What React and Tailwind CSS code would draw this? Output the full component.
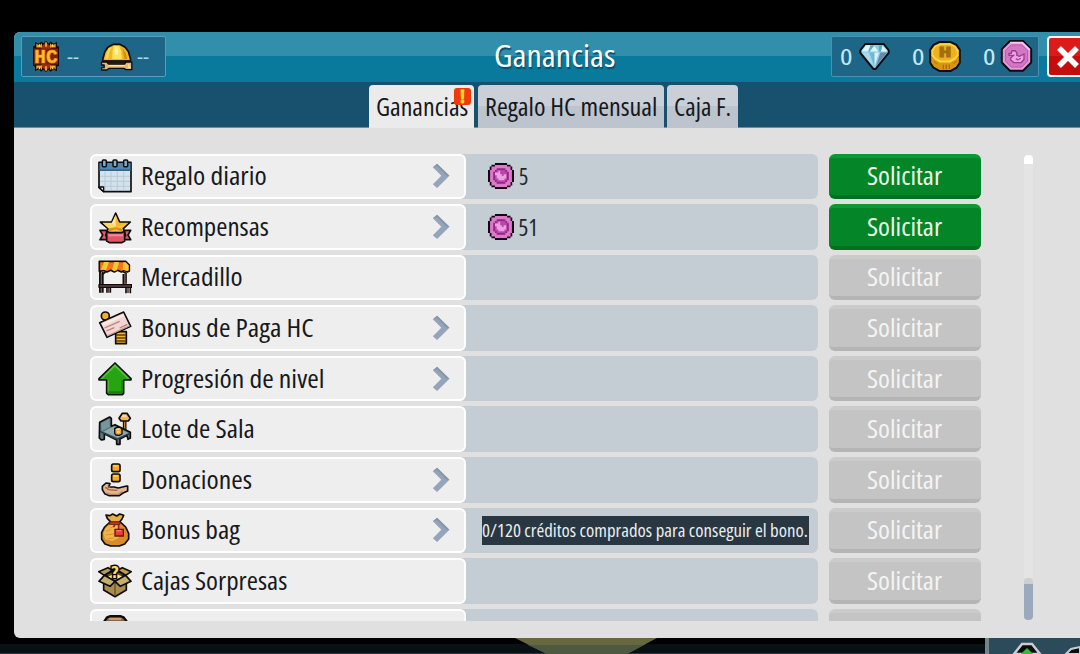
import React, { useLayoutEffect, useRef, useState } from "react";

const OUTLINE = { stroke: "#0d0d0d", strokeWidth: 5, strokeLinejoin: "round" };

// Condensed label: squeezes its text horizontally to the given width
function Squeeze({ width, className = "", children }) {
    const ref = useRef(null);
    const [scale, setScale] = useState(0.75);

    useLayoutEffect(() => {
        if (ref.current.offsetWidth) {
            setScale(width / ref.current.offsetWidth);
        }
    }, [width, children]);

    return (
        <span className={`block shrink-0 text-left whitespace-nowrap ${className}`} style={{ width }}>
            <span ref={ref} className="inline-block origin-left" style={{ transform: `scaleX(${scale})` }}>
                {children}
            </span>
        </span>
    );
}

function Icon({ children }) {
    return (
        <svg viewBox="0 0 102 102" className="w-[34px] h-[34px] shrink-0">
            {children}
        </svg>
    );
}

function CalendarIcon() {
    return (
        <Icon>
            <path d="M3 10H99V98H17L3 86Z" fill="#d3e2ec" {...OUTLINE} />
            <path d="M5 12H97V35H5Z" fill="#4c86b4" />
            <path d="M5 31H97V36H5Z" fill="#35688f" />
            <path d="M21 37V95M39 37V95M58 37V95M77 37V95M6 52H96M6 67H96M6 82H96" stroke="#b2c7d4" strokeWidth="2.5" />
            <path d="M3 84H17V98Z" fill="#eef4f7" {...OUTLINE} strokeWidth="4" />
            {[19, 51, 83].map(x => (
                <rect key={x} x={x - 6} y="3" width="12" height="20" rx="3" fill="#7fb0d3" {...OUTLINE} strokeWidth="4.5" />
            ))}
        </Icon>
    );
}

function StarIcon() {
    return (
        <Icon>
            <path d="M6 61H30V89H6L14 75Z M98 61H74V89H98L90 75Z" fill="#e0596b" {...OUTLINE} />
            <path d="M53 9L65 36H97L76 56L83 77L53 68L23 77L30 56L7 36H41Z" fill="#f9c342" {...OUTLINE} />
            <path d="M53 14L53 50L39 40H18L41 40Z" fill="#fdea98" />
            <path d="M53 15L62 39H90L54 52Z" fill="#f6b52d" />
            <path d="M14 39H41L53 52L33 56Z" fill="#fbd964" />
            <path d="M53 52L34 55L29 67L53 58L76 67L70 55Z" fill="#dd8e25" />
            <path d="M26 63L34 68H72L80 63V93L72 98H34L26 93Z" fill="#e25468" {...OUTLINE} />
            <path d="M31 73H75V79H31Z" fill="#f58a96" />
        </Icon>
    );
}

function StallIcon() {
    return (
        <Icon>
            <path d="M19 33H79V74H19Z" fill="#f1f1f1" />
            <path d="M6 6V98M14 35V98" stroke="#111" strokeWidth="6" />
            <path d="M10 38V98" stroke="#76504a" strokeWidth="4" />
            <path d="M14 43L24 34M84 71V40L73 34M76 72V42" stroke="#111" strokeWidth="5" fill="none" />
            <path d="M80 41V72" stroke="#76504a" strokeWidth="4" />
            <path d="M3 74H101V82H3Z" fill="#65443f" {...OUTLINE} strokeWidth="4" />
            <path d="M27 83V98M37 83V98M84 83V100M97 83V100" stroke="#111" strokeWidth="5" />
            <path d="M32 84V98M90 84V99" stroke="#65443f" strokeWidth="5" />
            <path d="M4 4H83L94 15V33L88 36L80 31L70 36L59 31L49 36L38 31L27 36L16 31L4 34Z" fill="#f3741b" {...OUTLINE} />
            <path d="M18 6H33L24 31L16 29L8 31Z M49 6H63L57 31L49 33L42 29Z M76 7H83L92 16V31L87 33L74 29Z" fill="#fcc536" />
        </Icon>
    );
}

function ChequeIcon() {
    return (
        <Icon>
            <circle cx="22" cy="15" r="12" fill="#f4ae2c" {...OUTLINE} />
            <path d="M53 62H85V98H53Z" fill="#f3b52c" {...OUTLINE} />
            <path d="M54 72H84M54 81H84M54 90H84" stroke="#5e3d0c" strokeWidth="4" />
            <path d="M5 35L77 3L98 46L27 79Z" fill="#f3d6d2" {...OUTLINE} />
            <path d="M12 38L76 10L79 16L15 44Z" fill="#fbeae7" />
            <path d="M20 51L65 31M25 60L49 50M65 51L88 40" stroke="#b78284" strokeWidth="4" />
            <path d="M27 75L95 44" stroke="#c69a99" strokeWidth="4" />
        </Icon>
    );
}

function LevelIcon() {
    return (
        <Icon>
            <path d="M51 3L99 50V54H77V94L73 98H31L26 94V54H3V50Z" fill="#27a411" {...OUTLINE} />
            <path d="M51 7L94 50H89L51 14L13 50H8Z" fill="#55c93f" />
            <path d="M29 55H33V92H29Z" fill="#46ba30" />
            <path d="M70 54H74V93H31V88H70Z" fill="#168208" />
        </Icon>
    );
}

function RoomIcon() {
    return (
        <Icon>
            <path d="M80 24V56" stroke="#111" strokeWidth="11" />
            <path d="M80 26V56" stroke="#c77d30" strokeWidth="4" />
            <path d="M73 4H87L97 19L91 27H69L63 19Z" fill="#f3b057" {...OUTLINE} />
            <path d="M74 8H83L87 16H70Z" fill="#ffd795" />
            <path d="M5 31L35 15L40 19V43L51 38L97 61V78L90 82L87 70L66 81V97H56V84L19 65V82L10 84L4 78Z" fill="#587781" {...OUTLINE} />
            <path d="M9 34L34 20L36 44L11 57Z" fill="#78949c" />
            <path d="M16 59L48 43L91 63L60 77Z" fill="#91a9ab" />
            <path d="M6 58L57 82L95 65" stroke="#27393f" strokeWidth="4" fill="none" />
            <path d="M50 50L57 46H67L72 52V66L64 70L54 69L50 64Z" fill="#e8a83d" {...OUTLINE} strokeWidth="4" />
            <path d="M55 53L65 51M57 60H66" stroke="#ffe199" strokeWidth="4" />
        </Icon>
    );
}

function DonationIcon() {
    return (
        <Icon>
            <rect x="41" y="3" width="25" height="23" rx="5" fill="#f8aa27" {...OUTLINE} />
            <rect x="41" y="33" width="25" height="23" rx="5" fill="#f8aa27" {...OUTLINE} />
            <path d="M46 9H59M46 39H59" stroke="#ffd361" strokeWidth="5" />
            <path d="M13 70L24 60L36 62L32 72H48L61 75L86 69H89V84L75 90L64 98H34L20 92L13 80Z" fill="#e4b68b" {...OUTLINE} />
            <path d="M22 73L32 80L58 82M36 72L29 72" stroke="#99684a" strokeWidth="4" fill="none" />
            <path d="M24 90L36 94H61L73 86" stroke="#bc8460" strokeWidth="4" fill="none" />
        </Icon>
    );
}

function BagIcon() {
    return (
        <Icon>
            <path d="M36 27H67L83 42L92 61V78L80 93L64 99H38L21 93L11 79V58L20 42Z" fill="#d88b28" {...OUTLINE} />
            <path d="M36 34L22 46L16 62L22 79L43 84L62 75L66 39Z" fill="#efb548" />
            <path d="M25 55L38 50M23 66L53 62M29 77L48 75M35 45L50 40" stroke="#d59530" strokeWidth="3" />
            <path d="M24 6L36 8L44 3L56 9L65 3L77 7L72 18L64 28H39L28 16Z" fill="#e8ae42" {...OUTLINE} />
            <path d="M34 27H66V34H34Z" fill="#d43b37" stroke="#691918" strokeWidth="3" />
            <path d="M62 34V49M51 36L46 42" stroke="#92201f" strokeWidth="5" />
            <path d="M51 49H76V69H51Z" fill="#f13e35" stroke="#6d1411" strokeWidth="4" />
            <path d="M55 53H70" stroke="#ff796a" strokeWidth="4" />
        </Icon>
    );
}

function MysteryBoxIcon() {
    return (
        <Icon>
            <path d="M17 42L51 56L85 42V78L51 98L17 78Z" fill="#a98d4c" {...OUTLINE} />
            <path d="M20 32L51 18L82 32L51 52Z" fill="#5f4c25" {...OUTLINE} />
            <path d="M30 38L51 28L74 38L51 50Z" fill="#fff07c" />
            <path d="M19 34L51 52L36 67L3 52Z M83 34L51 52L67 67L99 52Z" fill="#c7ae6c" {...OUTLINE} />
            <path d="M19 34L2 23L30 11L44 19Z M83 34L100 23L73 11L58 19Z" fill="#b79d5b" {...OUTLINE} />
            <path d="M51 56V95" stroke="#65522a" strokeWidth="4" />
            <text x="51" y="42" textAnchor="middle" fontFamily="DejaVu Sans, sans-serif" fontWeight="700" fontSize="48" fill="#ffdd5c" stroke="#0d0d0d" strokeWidth="9" paintOrder="stroke">?</text>
        </Icon>
    );
}

function ChestIcon() {
    return (
        <Icon>
            <path d="M17 22L27 7L38 3H66L77 7L88 22V99H17Z" fill="#8a6245" {...OUTLINE} strokeWidth="7" />
            <path d="M33 12H70" stroke="#c99a70" strokeWidth="6" />
        </Icon>
    );
}

function HcIcon() {
    return (
        <svg viewBox="0 0 84 98" className="w-7 h-[33px] shrink-0">
            <path d="M3 19L9 16V5L20 11L29 4L34 10L42 2L50 10L56 4L64 11L75 5V17L81 20V77L75 80V93L64 88L56 95L49 89L42 96L34 89L28 95L20 88L9 93V80L3 77Z" fill="#180c02" />
            <path d="M28 18L42 8L56 18V80L42 91L28 80Z" fill="#a52c0d" />
            <path d="M13 10L22 17L30 9V22H13Z M71 10L62 17L54 9V22H71Z M13 88L22 80L30 90V76H13Z M71 88L62 80L54 90V76H71Z" fill="#efa11d" />
            <path d="M42 6V20M42 78V92M22 12V20M62 12V20M22 79V87M62 79V87" stroke="#ffdc55" strokeWidth="4" />
            <path d="M6 25H78V73H6Z" fill="#7d2206" />
            <text x="42" y="68" textAnchor="middle" textLength="70" lengthAdjust="spacingAndGlyphs" fontFamily="Liberation Mono, monospace" fontWeight="700" fontSize="60" fill="#ffbd2c" stroke="#f39a1e" strokeWidth="2">HC</text>
        </svg>
    );
}

function HelmetIcon() {
    return (
        <svg viewBox="0 0 98 84" className="w-[33px] h-7 shrink-0">
            <path d="M8 48L14 26L23 13L40 4H59L75 13L85 26L91 48V54H8Z" fill="#f2b524" {...OUTLINE} />
            <path d="M34 12L27 30L24 47H16L20 29L27 16Z" fill="#ffd857" />
            <path d="M40 8H57L63 25L65 48H36L37 25Z" fill="#ffe15a" />
            <path d="M44 11H52L54 35L43 36Z" fill="#fff4a5" />
            <path d="M65 12L76 29L81 48H73L69 25Z" fill="#d58a17" />
            <path d="M6 52H92V60H6Z" fill="#20150b" />
            <path d="M4 57H20L25 63H73L78 57H95V80H78L71 76H27L20 81H4V74H12V66H4Z" fill="#e3b775" {...OUTLINE} strokeWidth="4" />
            <path d="M25 68H74M86 64V73H92" stroke="#fde0a7" strokeWidth="4" fill="none" />
        </svg>
    );
}

function DiamondIcon() {
    return (
        <svg viewBox="0 0 92 82" className="w-[31px] h-[27px] shrink-0">
            <path d="M18 3H74L89 22V30L49 79H43L3 30V22Z" fill="#8ecbe0" {...OUTLINE} strokeWidth="6" />
            <path d="M20 7H34L27 26H7Z M45 8L58 26H32Z M70 8L86 26H66Z" fill="#d9f6fc" />
            <path d="M34 7H45L31 26H27Z M60 7H70L65 26H59Z" fill="#5aa9c7" />
            <path d="M8 29H28L43 70Z" fill="#a5dcee" />
            <path d="M31 29H60L46 73Z" fill="#73b5d4" />
            <path d="M46 29H60L46 72Z" fill="#d4f3fb" />
            <path d="M64 29H85L50 71Z" fill="#6389b2" />
        </svg>
    );
}

function CreditIcon() {
    return (
        <svg viewBox="0 0 96 94" className="w-8 h-[31px] shrink-0">
            <path d="M32 3H64L83 12L93 27V66L83 81L64 91H32L13 81L3 66V27L13 12Z" fill="#d79712" {...OUTLINE} strokeWidth="6" />
            <path d="M32 7H64L80 15L89 28V44L80 56L64 65H32L16 56L7 44V28L16 15Z" fill="#ffd53f" />
            <path d="M33 12H63L77 19L84 31V40L76 51L62 59H34L20 51L12 40V31L19 19Z" fill="#efb21f" />
            <path d="M43 72V86M52 72V86M61 71V84" stroke="#a96c0d" strokeWidth="4" />
            <path d="M14 62L25 70M72 70L84 61" stroke="#ba7d10" strokeWidth="4" />
            <text x="48" y="49" textAnchor="middle" textLength="38" lengthAdjust="spacingAndGlyphs" fontFamily="Liberation Mono, monospace" fontWeight="700" fontSize="42" fill="#a66d0f" stroke="#a66d0f" strokeWidth="3">H</text>
        </svg>
    );
}

function DucketIcon() {
    return (
        <svg viewBox="0 0 98 98" className="w-[33px] h-8 shrink-0">
            <path d="M29 3H69L94 28V69L69 94H29L4 69V28Z" fill="#e798dc" {...OUTLINE} strokeWidth="6" />
            <path d="M33 15H65L83 32V65L65 83H33L15 65V32Z" fill="#d377c5" stroke="#b65aaa" strokeWidth="3" />
            <path d="M30 8H67L90 30" stroke="#fac5f3" strokeWidth="5" fill="none" />
            <path d="M35 33H45L50 39V47L58 50L72 43V59L64 69H41L31 61V55L40 47H26V41H33Z" fill="#eea3e4" stroke="#9c3b8c" strokeWidth="4" />
            <path d="M47 57L53 61L62 56" stroke="#a64a9a" strokeWidth="4" fill="none" />
        </svg>
    );
}

// Small pixel version of the ducket, drawn on a 15x15 grid
function SmallDucketIcon() {
    return (
        <svg viewBox="0 0 15 15" className="w-[26px] h-[26px] shrink-0">
            <path d="M4 0H11V1H13V2H14V4H15V11H14V13H13V14H11V15H4V14H2V13H1V11H0V4H1V2H2V1H4Z" fill="#160512" />
            <path d="M4 1.2H11V2H13V4H13.8V11H13V13H11V13.8H4V13H2V11H1.2V4H2V2H4Z" fill="#dc79c9" />
            <path d="M5 3H10V4H11V5H12V10H11V11H10V12H5V11H4V10H3V5H4V4H5Z" fill="#8e2984" />
            <path d="M5 4H10V5H11V10H10V11H5V10H4V5H5Z" fill="#b947aa" />
            <path d="M4 5.5H6V4.5H7V6.5H8V7.5H9V6.5H10.5V9H9.5V10H6V9H5V7H4Z" fill="#ee9ee2" />
        </svg>
    );
}

function Chevron() {
    return (
        <svg viewBox="0 0 54 80" className="w-[18px] h-[26px] shrink-0">
            <path d="M2 13L15 2L53 39L15 77L2 65L28 39Z" fill="#93a4bb" />
            <path d="M2 13L15 2L53 39H44L15 10Z" fill="#8795a6" />
        </svg>
    );
}

const ROWS = [
    { name: "Regalo diario", width: 126, icon: CalendarIcon, more: true, amount: "5", amountWidth: 9.5 },
    { name: "Recompensas", width: 128, icon: StarIcon, more: true, amount: "51", amountWidth: 20 },
    { name: "Mercadillo", width: 101, icon: StallIcon },
    { name: "Bonus de Paga HC", width: 173, icon: ChequeIcon, more: true },
    { name: "Progresión de nivel", width: 184, icon: LevelIcon, more: true },
    { name: "Lote de Sala", width: 114, icon: RoomIcon },
    { name: "Donaciones", width: 111, icon: DonationIcon, more: true },
    { name: "Bonus bag", width: 99, icon: BagIcon, more: true, note: "0/120 créditos comprados para conseguir el bono." },
    { name: "Cajas Sorpresas", width: 146, icon: MysteryBoxIcon },
    { name: "", width: 0, icon: ChestIcon },
];

function EarningRow({ row }) {
    const RowIcon = row.icon;
    const active = Boolean(row.amount);

    return (
        <div className="flex h-[45.6px] shrink-0">
            <div className="flex w-[727.5px] rounded-md bg-[#c4cdd4]">
                <div className="flex w-[375.5px] items-center rounded-md border-[2.5px] border-white bg-[#eeeeee] pl-[6px] pr-[14px]">
                    <RowIcon />
                    <Squeeze width={row.width} className="ml-[8.5px] text-[24.5px] leading-[34px] text-[#17191c]">
                        {row.name}
                    </Squeeze>
                    <span className="grow" />
                    {row.more && <Chevron />}
                </div>
                {active && (
                    <div className="flex items-center pl-[22.5px]">
                        <SmallDucketIcon />
                        <Squeeze width={row.amountWidth} className="ml-[4.5px] text-[23px] leading-[34px] text-[#20262a]">
                            {row.amount}
                        </Squeeze>
                    </div>
                )}
                {row.note && (
                    <div className="ml-4 mt-[8px] h-[29px] w-[327px] bg-[#283741] text-[#e9eef1]">
                        <Squeeze width={326} className="text-[18px] leading-[29px]">
                            {row.note}
                        </Squeeze>
                    </div>
                )}
            </div>
            <button
                className={`ml-[11px] flex w-[152px] items-center justify-center rounded-md border-t-4 border-b-4 ${
                    active
                        ? "border-t-[#0a9a34] border-b-[#04701f] bg-[#048527] text-[#eefbea]"
                        : "border-t-[#cbcbcb] border-b-[#b5b5b5] bg-[#c4c4c4] text-[#f4f4f4]"
                }`}
            >
                {row.name && (
                    <Squeeze width={75} className="text-[24.5px] leading-[34px]">
                        Solicitar
                    </Squeeze>
                )}
            </button>
        </div>
    );
}

function Header() {
    return (
        <header className="flex h-[50px] items-start bg-linear-to-b from-[#318fab] from-[48%] to-[#0a7a9c] to-[48%] pt-1 pl-[7px]">
            <div className="flex h-[41px] w-[145px] items-center rounded-xs border border-[#5d9bb9] bg-[#1d6688] pl-[10px] text-[#a9dbf2]">
                <HcIcon />
                <span className="ml-[7px] w-[33px] text-[20px] leading-none">
                    <Squeeze width={12}>--</Squeeze>
                </span>
                <HelmetIcon />
                <Squeeze width={12} className="ml-[4px] text-[20px] leading-none">--</Squeeze>
            </div>
            <h1 className="w-[665px] pl-[328px] text-[31px] leading-[38px] text-white text-shadow-[1px_2px_1px_#0c4c6c]">
                <Squeeze width={121}>Ganancias</Squeeze>
            </h1>
            <div className="flex h-[41px] w-[208px] items-center rounded-xs border border-[#4d91b0] bg-[#1d6688] pb-px pl-2 text-[22px] leading-none text-[#c3e9f7]">
                <Squeeze width={12}>0</Squeeze>
                <span className="ml-[7px] flex"><DiamondIcon /></span>
                <Squeeze width={12} className="ml-[22px]">0</Squeeze>
                <span className="ml-[5px] flex"><CreditIcon /></span>
                <Squeeze width={12} className="ml-[22px]">0</Squeeze>
                <span className="ml-[5px] flex"><DucketIcon /></span>
            </div>
            <button className="ml-[8px] flex h-[41px] w-[42px] items-center justify-center rounded-sm border-2 border-white bg-linear-to-b from-[#dc1a1a] from-[50%] to-[#c60d0d] to-[50%]">
                <svg viewBox="0 0 24 24" className="h-6 w-6">
                    <path d="M3 3L21 21M21 3L3 21" stroke="#ffffff" strokeWidth="5.5" />
                </svg>
            </button>
        </header>
    );
}

function Tabs() {
    return (
        <nav className="flex h-[45.5px] items-end gap-[3.5px] border-b border-[#6d8c9c] bg-[#18516e] pl-[355px] text-[24.5px] leading-[43px] text-[#16181b]">
            <div className="relative -mb-px h-[43px] w-[105px] rounded-t-sm bg-[#ebebeb] pl-[7px]">
                <Squeeze width={92}>Ganancias</Squeeze>
                <span className="absolute left-[85px] top-[3px] flex h-[17px] w-[17px] items-center justify-center rounded-[3px] bg-[#f03a0c] font-bold text-[17px] leading-none text-[#ffdf22] [-webkit-text-stroke:1px_#ffdf22]">
                    !
                </span>
            </div>
            <div className="-mb-px h-[43px] w-[186px] rounded-t-sm bg-linear-to-b from-[#cbd0d8] from-[50%] to-[#bdc4cd] to-[50%] pl-[7px]">
                <Squeeze width={173}>Regalo HC mensual</Squeeze>
            </div>
            <div className="-mb-px h-[43px] w-[71px] rounded-t-sm bg-linear-to-b from-[#cbd0d8] from-[50%] to-[#bdc4cd] to-[50%] pl-[7px]">
                <Squeeze width={57}>Caja F.</Squeeze>
            </div>
        </nav>
    );
}

function App() {
    return (
        <div className="h-[654px] w-[1080px] overflow-hidden bg-black pt-8 font-['Open_Sans','Noto_Sans',sans-serif] font-medium font-stretch-condensed">
            <div className="ml-[14px] h-[606px] w-[1080px] overflow-hidden rounded-md bg-[#e0e0e0]">
                <Header />
                <Tabs />
                <main className="flex pl-[76px] pt-[26px]">
                    <div className="flex h-[467.5px] w-[891px] flex-col gap-[5px] overflow-hidden">
                        {ROWS.map((row, i) => (
                            <EarningRow key={i} row={row} />
                        ))}
                    </div>
                    <div className="ml-[43px] mt-px flex h-[465px] w-[9px] flex-col items-center">
                        <div className="h-[9px] w-[9px] rounded-t-sm bg-white" />
                        <div className="w-[9px] grow bg-[#e4e4e4]" />
                        <div className="h-[42px] w-[9px] rounded-sm border-t-[6px] border-t-[#cdd0d2] bg-[#9ba9bc]" />
                    </div>
                </main>
            </div>
            <footer className="flex h-4">
                <div className="h-4 w-[985px] bg-linear-to-b from-black from-[35%] to-[#081116] to-[35%]">
                    <svg viewBox="0 0 985 16" className="h-4 w-[985px]">
                        <path d="M0 15.5H985" stroke="#2d3640" />
                        <path d="M515 0H657L627 16H547Z" fill="#68683e" />
                        <path d="M528 7H644L627 16H547Z" fill="#4d5941" />
                    </svg>
                </div>
                <div className="flex h-4 w-[95px] border-l-4 border-[#73858c] bg-[#2b4b5b]">
                    <svg viewBox="0 0 91 16" className="h-4 w-[91px]">
                        <path d="M25 16L33 6H43L51 16Z" fill="#0c0c0c" stroke="#c8cdd0" strokeWidth="2.5" />
                        <path d="M32 16L38 10L44 16Z" fill="#2fbf35" />
                        <path d="M77 16L82 11L91 9V16Z" fill="#0c0c0c" stroke="#c8cdd0" strokeWidth="2" />
                    </svg>
                </div>
            </footer>
        </div>
    );
}

export default App;
